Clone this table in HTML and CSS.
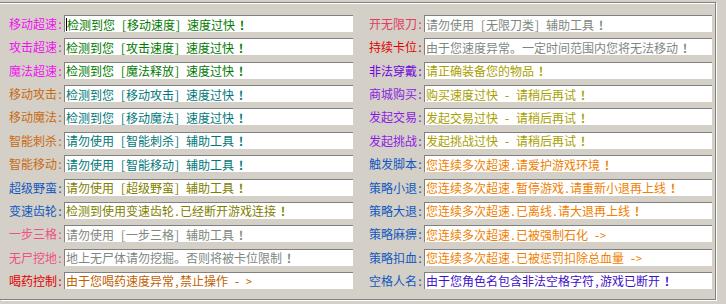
FILE: index.html
```html
<!DOCTYPE html>
<html lang="zh-CN">
<head>
<meta charset="utf-8">
<title>反外挂提示设置</title>
<link rel="stylesheet" href="styles.css">
</head>
<body>
<div class="panel">
  <div class="grid">
    <label class="lbl c-mag">移动超速:</label><div class="box t-green"><span class="caret"></span>检测到您 [移动速度] 速度过快 <b>!</b></div><span></span>
    <label class="lbl c-pinkred">开无限刀:</label><div class="box t-gray">请勿使用 [无限刀类] 辅助工具 <b>!</b></div>

    <label class="lbl c-mag">攻击超速:</label><div class="box t-green">检测到您 [攻击速度] 速度过快 <b>!</b></div><span></span>
    <label class="lbl c-red">持续卡位:</label><div class="box t-gray">由于您速度异常。一定时间范围内您将无法移动 <b>!</b></div>

    <label class="lbl c-mag">魔法超速:</label><div class="box t-green">检测到您 [魔法释放] 速度过快 <b>!</b></div><span></span>
    <label class="lbl c-violet">非法穿戴:</label><div class="box t-olive2">请正确装备您的物品 <b>!</b></div>

    <label class="lbl c-brown">移动攻击:</label><div class="box t-teal">检测到您 [移动攻击] 速度过快 <b>!</b></div><span></span>
    <label class="lbl c-purple">商城购买:</label><div class="box t-olive2">购买速度过快 - 请稍后再试 <b>!</b></div>

    <label class="lbl c-brown">移动魔法:</label><div class="box t-teal">检测到您 [移动魔法] 速度过快 <b>!</b></div><span></span>
    <label class="lbl c-purple">发起交易:</label><div class="box t-olive2">发起交易过快 - 请稍后再试 <b>!</b></div>

    <label class="lbl c-brown">智能刺杀:</label><div class="box t-teal">请勿使用 [智能刺杀] 辅助工具 <b>!</b></div><span></span>
    <label class="lbl c-purple">发起挑战:</label><div class="box t-olive2">发起挑战过快 - 请稍后再试 <b>!</b></div>

    <label class="lbl c-brown">智能移动:</label><div class="box t-teal">请勿使用 [智能移动] 辅助工具 <b>!</b></div><span></span>
    <label class="lbl c-blue">触发脚本:</label><div class="box t-orange">您连续多次超速.请爱护游戏环境 <b>!</b></div>

    <label class="lbl c-blue">超级野蛮:</label><div class="box t-olive">请勿使用 [超级野蛮] 辅助工具 <b>!</b></div><span></span>
    <label class="lbl c-blue">策略小退:</label><div class="box t-orange">您连续多次超速.暂停游戏.请重新小退再上线 <b>!</b></div>

    <label class="lbl c-blue">变速齿轮:</label><div class="box t-olive">检测到使用变速齿轮.已经断开游戏连接 <b>!</b></div><span></span>
    <label class="lbl c-blue">策略大退:</label><div class="box t-orange">您连续多次超速.已离线.请大退再上线 <b>!</b></div>

    <label class="lbl c-pink">一步三格:</label><div class="box t-gray">请勿使用 [一步三格] 辅助工具 <b>!</b></div><span></span>
    <label class="lbl c-blue">策略麻痹:</label><div class="box t-orange">您连续多次超速.已被强制石化 -&gt;</div>

    <label class="lbl c-pink">无尸挖地:</label><div class="box t-gray">地上无尸体请勿挖掘。否则将被卡位限制 <b>!</b></div><span></span>
    <label class="lbl c-blue">策略扣血:</label><div class="box t-orange">您连续多次超速.已被惩罚扣除总血量 -&gt;</div>

    <label class="lbl c-red">喝药控制:</label><div class="box t-brown">由于您喝药速度异常,禁止操作 - &gt;</div><span></span>
    <label class="lbl c-blue">空格人名:</label><div class="box t-indigo">由于您角色名包含非法空格字符,游戏已断开 <b>!</b></div>
  </div>
</div>
</body>
</html>
```

FILE: styles.css
```css
html, body {
  margin: 0;
  padding: 0;
  background: #d4d0c8;
  width: 726px;
  height: 304px;
  overflow: hidden;
}

body {
  font-family: "Noto Sans Mono CJK SC", "Noto Sans CJK SC", sans-serif;
  font-size: 12px;
}

.panel {
  margin-top: 2px;
  width: 716px;
  height: 298px;
  border-top: 1px solid #808080;
  border-right: 1px solid #808080;
  border-bottom: 1px solid #808080;
  box-shadow: 1px 1px 0 #ffffff, inset 0 1px 0 #ffffff;
  box-sizing: border-box;
  padding-top: 12px;
  padding-left: 8px;
}

.grid {
  display: grid;
  grid-template-columns: 56px 289px 15px 56px 288px;
  grid-template-rows: repeat(12, 17px);
  row-gap: 6.36px;
}

.lbl {
  display: flex;
  align-items: center;
  justify-content: flex-end;
  white-space: nowrap;
  line-height: 17px;
  padding-right: 1px;
}

.box {
  background: #ffffff;
  border-top: 1px solid #808080;
  border-left: 1px solid #808080;
  box-sizing: border-box;
  height: 17px;
  line-height: 15px;
  padding-left: 1px;
  white-space: nowrap;
  overflow: hidden;
  display: flex;
  align-items: center;
}

.box b {
  font-weight: 900;
  margin-left: 4px;
}

.caret {
  display: inline-block;
  width: 1px;
  height: 13px;
  background: #000;
  margin-right: 0;
}

/* label colours */
.c-mag { color: #f010f0; }
.c-brown { color: #c86a10; }
.c-blue { color: #1058c0; }
.c-pink { color: #f05080; }
.c-red { color: #e00000; }
.c-pinkred { color: #e03c64; }
.c-violet { color: #7000e0; }
.c-purple { color: #8c1ce0; }

/* text colours */
.t-green { color: #007a00; }
.t-teal { color: #007878; }
.t-olive { color: #808000; }
.t-olive2 { color: #a8a000; }
.t-gray { color: #80877f; }
.t-brown { color: #c06000; }
.t-orange { color: #f08000; }
.t-indigo { color: #4010c8; }
```
